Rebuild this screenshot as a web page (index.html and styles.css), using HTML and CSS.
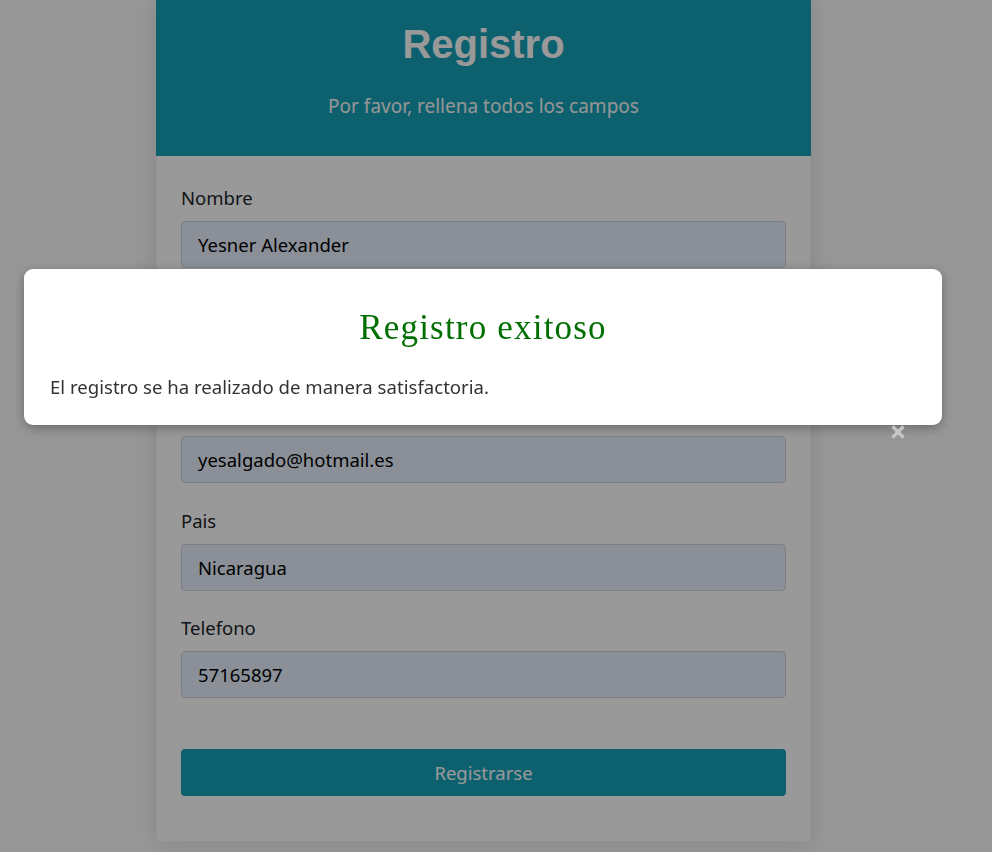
FILE: index.html
```html
<!DOCTYPE html>
<html lang="es">
<head>
<meta charset="utf-8">
<title>Registro</title>
<link rel="stylesheet" href="styles.css">
</head>
<body>
<div class="page">
  <div class="card">
    <div class="card-header">
      <h1 class="title">Registro</h1>
      <p class="subtitle">Por favor, rellena todos los campos</p>
    </div>
    <form class="card-body">
      <div class="group">
        <label class="label">Nombre</label>
        <div class="input">Yesner Alexander</div>
      </div>
      <div class="group">
        <label class="label">Apellido</label>
        <div class="input">Delgado</div>
      </div>
      <div class="group">
        <label class="label">Correo</label>
        <div class="input">yesalgado@hotmail.es</div>
      </div>
      <div class="group">
        <label class="label">Pais</label>
        <div class="input">Nicaragua</div>
      </div>
      <div class="group">
        <label class="label">Telefono</label>
        <div class="input">57165897</div>
      </div>
      <div class="button">Registrarse</div>
    </form>
  </div>
</div>
<div class="overlay"></div>
<div class="modal">
  <h2 class="modal-title">Registro exitoso</h2>
  <p class="modal-text">El registro se ha realizado de manera satisfactoria.</p>
  <svg class="modal-close" width="16" height="16" viewBox="0 0 16 16"><path d="M2.5 2.5 L13.5 13.5 M13.5 2.5 L2.5 13.5" stroke="#c6c6c6" stroke-width="3.2" stroke-linecap="butt"/></svg>
</div>
</body>
</html>
```
FILE: styles.css
```css
html, body {
  margin: 0;
  padding: 0;
}
body {
  background: #fbfbfb;
  font-family: "Noto Sans", "Open Sans", sans-serif;
  color: #212529;
  height: 852px;
  overflow: hidden;
}
.page {
  width: 967px;
  display: flex;
  justify-content: center;
}
.card {
  width: 655px;
  background: #fff;
  border-radius: 0 0 5px 5px;
  box-shadow: 0 0 22px rgba(0, 0, 0, 0.12);
  border: 1px solid #f3f3f3;
  border-top: 0;
  box-sizing: border-box;
}
.card-header {
  background: #17a2b8;
  height: 156px;
  box-sizing: border-box;
  padding-top: 20px;
  text-align: center;
  color: #fff;
  margin: 0 -1px;
}
.title {
  margin: 0;
  font-family: "Liberation Sans", Arial, sans-serif;
  font-weight: bold;
  font-size: 40px;
  line-height: 48px;
}
.subtitle {
  margin: 24px 0 0;
  font-size: 19px;
  line-height: 28px;
  color: #fafafa;
}
.card-body {
  padding: 28px 24px 45px;
  display: flex;
  flex-direction: column;
}
.group {
  display: flex;
  flex-direction: column;
  margin-bottom: 23.5px;
}
.label {
  font-size: 18.5px;
  line-height: 27px;
  margin-bottom: 10px;
}
.input {
  height: 47px;
  box-sizing: border-box;
  background: #e8f0fe;
  border: 1px solid #cfd5db;
  border-radius: 4px;
  padding: 0 16px;
  display: flex;
  align-items: center;
  font-size: 18.5px;
  color: #000;
}
.button {
  margin-top: 27.5px;
  height: 47px;
  background: #17a2b8;
  border-radius: 4px;
  color: #fff;
  font-size: 18.5px;
  display: flex;
  align-items: center;
  justify-content: center;
}
.overlay {
  position: fixed;
  inset: 0;
  background: rgba(0, 0, 0, 0.4);
}
.modal {
  position: fixed;
  top: 269px;
  left: 24px;
  width: 918px;
  height: 156px;
  box-sizing: border-box;
  background: #fff;
  border-radius: 9px;
  box-shadow: 0 3px 12px rgba(0, 0, 0, 0.3);
  padding: 38px 26px 25px;
}
.modal-title {
  margin: 0 0 24px;
  text-align: center;
  font-family: "Liberation Serif", "Times New Roman", serif;
  font-weight: normal;
  font-size: 35px;
  line-height: 42px;
  letter-spacing: 1.2px;
  color: #006e00;
}
.modal-text {
  margin: 0;
  font-size: 18.6px;
  line-height: 27px;
  color: #333;
}
.modal-close {
  position: absolute;
  right: 36px;
  bottom: -15px;
}
```
